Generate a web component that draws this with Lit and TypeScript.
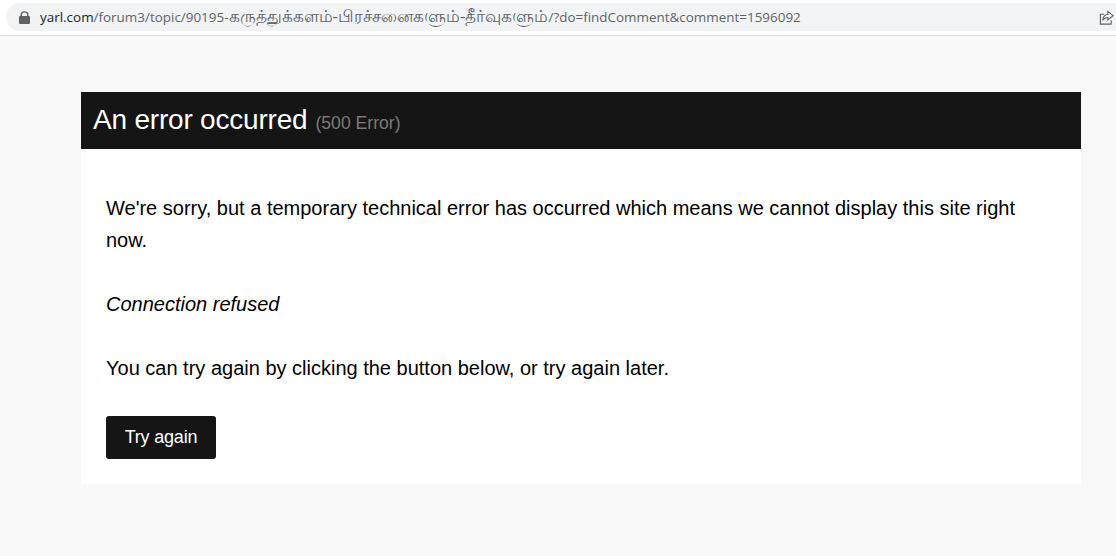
import { LitElement, html, css } from "lit";
import { customElement } from "lit/decorators.js";

@customElement("app-root")
export class AppRoot extends LitElement {
  static styles = css`
    :host {
      display: block;
      height: 556px;
      overflow: hidden;
      background: #f9f9f9;
      font-family: "Liberation Sans", Arial, sans-serif;
    }

    .chrome {
      height: 28px;
      padding: 3px 0 4px 6px;
      background: #fff;
      border-bottom: 1px solid #dadce0;
    }

    .omnibox {
      height: 28px;
      display: flex;
      align-items: center;
      background: #f1f3f4;
      border-radius: 14px 0 0 14px;
      padding-left: 13px;
      padding-right: 2px;
      font-family: "Open Sans", "Noto Sans", sans-serif;
      font-size: 13.45px;
      color: #5f6368;
    }

    .lock {
      width: 11px;
      height: 13px;
      margin-right: 10px;
      flex: none;
    }

    .url {
      flex: 1;
      white-space: nowrap;
      overflow: hidden;
      line-height: 28px;
    }

    .host {
      color: #202124;
    }

    .tamil {
      font-size: 17px;
      line-height: 1;
    }

    .share {
      width: 15px;
      height: 15px;
      flex: none;
    }

    .page {
      padding: 56px 35px 0 81px;
    }

    .head {
      height: 57px;
      display: flex;
      align-items: baseline;
      gap: 8px;
      padding: 11px 12px 0;
      box-sizing: border-box;
      background: #151515;
      color: #fff;
    }

    .title {
      margin: 0;
      font-size: 28px;
      font-weight: 400;
      letter-spacing: -0.2px;
      line-height: 34px;
    }

    .code {
      font-size: 17.6px;
      color: #7a7a7a;
    }

    .body {
      background: #fff;
      padding: 43px 25px 25px;
      font-size: 20px;
      line-height: 32px;
      color: #000;
    }

    .body p {
      margin: 0 0 32px;
    }

    .reason {
      font-style: italic;
    }

    .retry {
      display: block;
      width: 110px;
      height: 43px;
      padding: 0;
      border: 0;
      border-radius: 3px;
      background: #151515;
      color: #fff;
      font-family: inherit;
      font-size: 18px;
      letter-spacing: -0.2px;
    }
  `;

  render() {
    return html`
      <div class="chrome">
        <div class="omnibox">
          <svg class="lock" viewBox="0 0 11 13">
            <path
              fill="#5f6368"
              d="M1.5 5V3.8a4 3.6 0 0 1 8 0V5h.5a1 1 0 0 1 1 1v6a1 1 0 0 1-1 1H1a1 1 0 0 1-1-1V6a1 1 0 0 1 1-1zM3 5h5V3.8a2.5 2.3 0 0 0-5 0z"
            />
          </svg>
          <span class="url"><span class="host">yarl.com</span>/forum3/topic/90195-<span class="tamil">கருத்துக்களம்-பிரச்சனைகளும்-தீர்வுகளும்</span>/?do=findComment&amp;comment=1596092</span>
          <svg class="share" viewBox="0 0 16 16" fill="none" stroke="#5f6368" stroke-width="1.2">
            <path d="M5.5 4.5H1.5V15H13V11" />
            <path d="M9.5 1.5 15 6 9.5 10.5V8C7 8 5.2 9 4 11c.2-3.4 2-6 5.5-6.5z" />
          </svg>
        </div>
      </div>
      <div class="page">
        <div class="head">
          <h1 class="title">An error occurred</h1>
          <span class="code">(500 Error)</span>
        </div>
        <div class="body">
          <p>We're sorry, but a temporary technical error has occurred which means we cannot display this site right now.</p>
          <p class="reason">Connection refused</p>
          <p>You can try again by clicking the button below, or try again later.</p>
          <button class="retry">Try again</button>
        </div>
      </div>
    `;
  }
}
